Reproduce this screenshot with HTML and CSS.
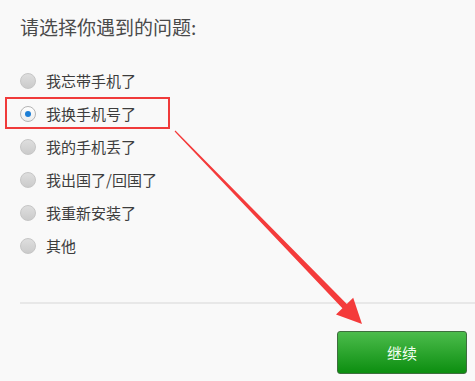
FILE: index.html
```html
<!DOCTYPE html>
<html lang="zh">
<head>
<meta charset="utf-8">
<link rel="stylesheet" href="styles.css">
</head>
<body>
<div class="page">
  <h1 class="title">请选择你遇到的问题:</h1>
  <ul class="options">
    <li class="option"><span class="radio"></span><span class="label">我忘带手机了</span></li>
    <li class="option"><span class="radio checked"></span><span class="label">我换手机号了</span></li>
    <li class="option"><span class="radio"></span><span class="label">我的手机丢了</span></li>
    <li class="option"><span class="radio"></span><span class="label">我出国了/回国了</span></li>
    <li class="option"><span class="radio"></span><span class="label">我重新安装了</span></li>
    <li class="option"><span class="radio"></span><span class="label">其他</span></li>
  </ul>
  <div class="divider"></div>
  <div class="actions"><button class="btn">继续</button></div>

  <div class="highlight"></div>
  <svg class="arrow" width="475" height="381" viewBox="0 0 475 381">
    <polygon points="175.4,130.6 346.8,304.0 353.2,297.8 362,324 336,314.4 342.4,308.2 174.6,131.4" fill="#f43b3b"/>
  </svg>
</div>
</body>
</html>
```
FILE: styles.css
```css
html, body {
  margin: 0;
  padding: 0;
  background: #f9f9f9;
}
body {
  font-family: "Noto Sans CJK SC", "Noto Sans", sans-serif;
  color: #444;
}
.page {
  position: relative;
  width: 475px;
  height: 381px;
  padding-top: 14px;
  box-sizing: border-box;
  overflow: hidden;
}
.title {
  margin: 0 0 0 20px;
  font-size: 19px;
  line-height: 26px;
  font-weight: normal;
  color: #4a4a4a;
}
.options {
  list-style: none;
  margin: 24px 0 0 0;
  padding: 0 0 0 20px;
}
.option {
  display: flex;
  align-items: center;
  height: 33px;
}
.radio {
  width: 16px;
  height: 16px;
  border-radius: 50%;
  box-sizing: border-box;
  border: 1px solid #c6c6c6;
  background: linear-gradient(#dedede, #cbcbcb);
  margin-right: 10px;
  display: flex;
  align-items: center;
  justify-content: center;
}
.radio.checked {
  border-color: #b4b4b4;
  background: linear-gradient(#ffffff, #ececec);
}
.radio.checked::after {
  content: "";
  width: 6px;
  height: 6px;
  border-radius: 50%;
  background: #1e7fd6;
}
.label {
  font-size: 15px;
  color: #3d3d3d;
  line-height: 20px;
}
.divider {
  margin: 40px 0 0 20px;
  height: 2px;
  background: #e8e8e8;
}
.actions {
  display: flex;
  justify-content: flex-end;
  padding: 27px 8px 0 0;
}
.btn {
  width: 130px;
  height: 43px;
  border: 1px solid #3e6e3e;
  border-radius: 3px;
  background: linear-gradient(#4cbc4c, #0c8e10);
  color: #f2fff2;
  font-family: "Noto Sans CJK SC", sans-serif;
  font-size: 15px;
  padding: 0;
}
.highlight {
  position: absolute;
  left: 5px;
  top: 97px;
  width: 165px;
  height: 32px;
  box-sizing: border-box;
  border: 2.5px solid #f03b3b;
}
.arrow {
  position: absolute;
  left: 0;
  top: 0;
  pointer-events: none;
}
```
